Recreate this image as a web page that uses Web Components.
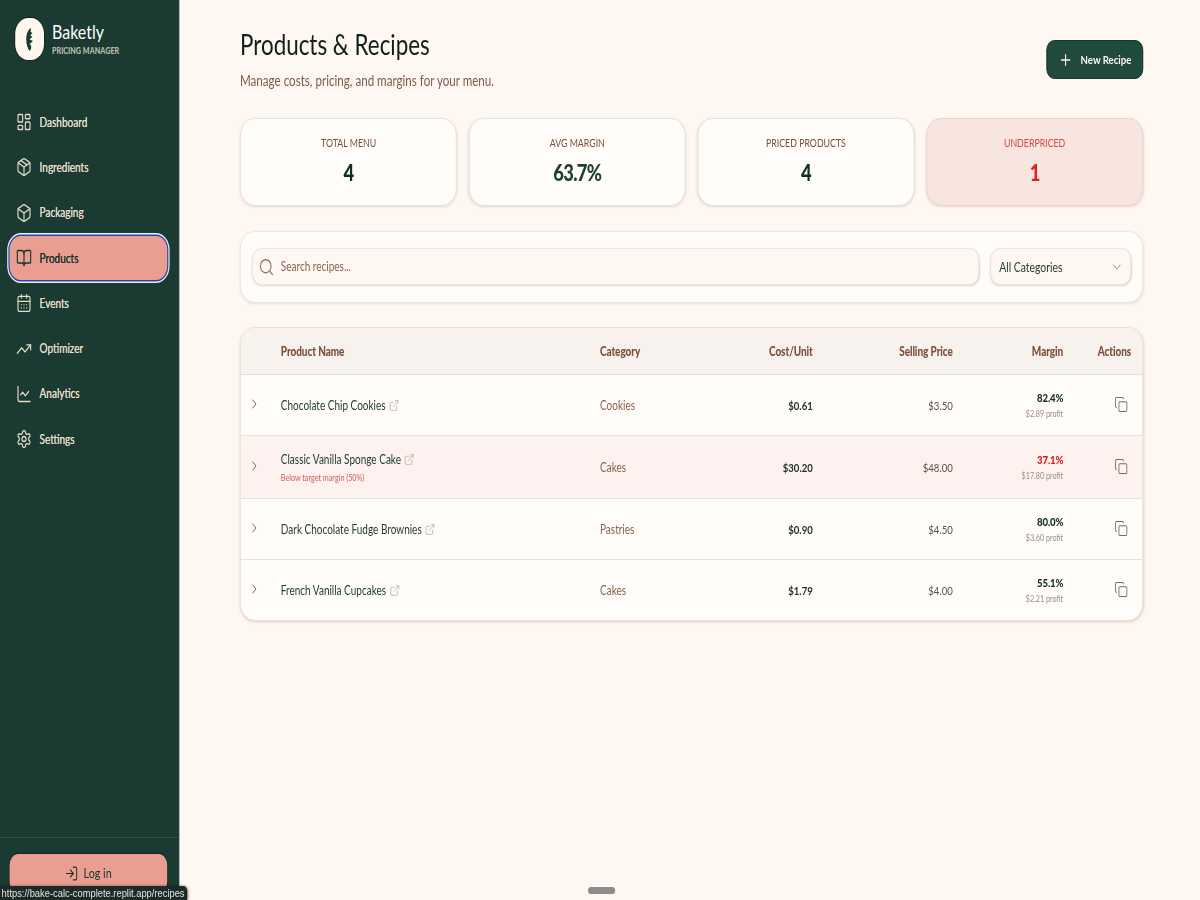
<!DOCTYPE html>
<html><head><meta charset="utf-8">
<style>
html,body{margin:0;width:1200px;height:900px;background:#fff7f2;font-family:Lato,"Noto Sans",sans-serif;overflow:hidden}
</style></head><body>
<bk-app></bk-app>
<script>
const I={
dash:'<rect width="7" height="9" x="3" y="3" rx="1"/><rect width="7" height="5" x="14" y="3" rx="1"/><rect width="7" height="9" x="14" y="12" rx="1"/><rect width="7" height="5" x="3" y="16" rx="1"/>',
pack:'<path d="m7.5 4.27 9 5.15"/><path d="M21 8a2 2 0 0 0-1-1.73l-7-4a2 2 0 0 0-2 0l-7 4A2 2 0 0 0 3 8v8a2 2 0 0 0 1 1.73l7 4a2 2 0 0 0 2 0l7-4A2 2 0 0 0 21 16Z"/><path d="m3.3 7 8.7 5 8.7-5"/><path d="M12 22V12"/>',
box:'<path d="M21 8a2 2 0 0 0-1-1.73l-7-4a2 2 0 0 0-2 0l-7 4A2 2 0 0 0 3 8v8a2 2 0 0 0 1 1.73l7 4a2 2 0 0 0 2 0l7-4A2 2 0 0 0 21 16Z"/><path d="m3.3 7 8.7 5 8.7-5"/><path d="M12 22V12"/>',
book:'<path d="M12 7v14"/><path d="M3 18a1 1 0 0 1-1-1V4a1 1 0 0 1 1-1h5a4 4 0 0 1 4 4 4 4 0 0 1 4-4h5a1 1 0 0 1 1 1v13a1 1 0 0 1-1 1h-6a3 3 0 0 0-3 3 3 3 0 0 0-3-3z"/>',
cal:'<path d="M8 2v4"/><path d="M16 2v4"/><rect width="18" height="18" x="3" y="4" rx="2"/><path d="M3 10h18"/><path d="M8 14h.01"/><path d="M12 14h.01"/><path d="M16 14h.01"/><path d="M8 18h.01"/><path d="M12 18h.01"/><path d="M16 18h.01"/>',
trend:'<path d="M16 7h6v6"/><path d="m22 7-8.5 8.5-5-5L2 17"/>',
chart:'<path d="M3 3v16a2 2 0 0 0 2 2h16"/><path d="m19 9-5 5-4-4-3 3"/>',
gear:'<path d="M12.22 2h-.44a2 2 0 0 0-2 2v.18a2 2 0 0 1-1 1.73l-.43.25a2 2 0 0 1-2 0l-.15-.08a2 2 0 0 0-2.73.73l-.22.38a2 2 0 0 0 .73 2.73l.15.1a2 2 0 0 1 1 1.72v.51a2 2 0 0 1-1 1.74l-.15.09a2 2 0 0 0-.73 2.73l.22.38a2 2 0 0 0 2.73.73l.15-.08a2 2 0 0 1 2 0l.43.25a2 2 0 0 1 1 1.73V20a2 2 0 0 0 2 2h.44a2 2 0 0 0 2-2v-.18a2 2 0 0 1 1-1.73l.43-.25a2 2 0 0 1 2 0l.15.08a2 2 0 0 0 2.73-.73l.22-.39a2 2 0 0 0-.73-2.73l-.15-.08a2 2 0 0 1-1-1.74v-.5a2 2 0 0 1 1-1.74l.15-.09a2 2 0 0 0 .73-2.73l-.22-.38a2 2 0 0 0-2.73-.73l-.15.08a2 2 0 0 1-2 0l-.43-.25a2 2 0 0 1-1-1.73V4a2 2 0 0 0-2-2z"/><circle cx="12" cy="12" r="3"/>',
login:'<path d="M15 3h4a2 2 0 0 1 2 2v14a2 2 0 0 1-2 2h-4"/><path d="m10 17 5-5-5-5"/><path d="M15 12H3"/>',
plus:'<path d="M5 12h14"/><path d="M12 5v14"/>',
search:'<path d="m21 21-4.34-4.34"/><circle cx="11" cy="11" r="8"/>',
down:'<path d="m6 9 6 6 6-6"/>',
right:'<path d="m9 18 6-6-6-6"/>',
ext:'<path d="M15 3h6v6"/><path d="M10 14 21 3"/><path d="M18 13v6a2 2 0 0 1-2 2H5a2 2 0 0 1-2-2V8a2 2 0 0 1 2-2h6"/>',
copy:'<rect width="14" height="14" x="8" y="8" rx="2"/><path d="M4 16c-1.1 0-2-.9-2-2V4c0-1.1.9-2 2-2h10c1.1 0 2 .9 2 2"/>'
};
const svg=(n,s,sw=2)=>`<svg width="${s}" height="${s}" viewBox="0 0 24 24" fill="none" stroke="currentColor" stroke-width="${sw}" stroke-linecap="round" stroke-linejoin="round" style="flex:none;display:block">${I[n]}</svg>`;
class El extends HTMLElement{
 constructor(){super();this.attachShadow({mode:'open'});}
 connectedCallback(){this.shadowRoot.innerHTML=this.render();}
 a(n){return this.getAttribute(n)||'';}
}
class NavItem extends El{render(){return `<style>
:host{display:block}
a{display:flex;align-items:center;gap:9.5px;height:45.3px;box-sizing:border-box;padding:0 8px;font-size:12.5px;color:#e3dccb;border-radius:14px;text-shadow:0 0 .4px currentColor}
:host([active]) a{height:44px;margin:.65px 0;background:#ea9e92;color:#17342c;box-shadow:0 0 0 1.5px #1f47b8,0 0 0 3px #f4efe8}
</style><a>${svg(this.a('icon'),20,1.7)}<span><slot></slot></span></a>`}}
class Sidebar extends El{render(){return `<style>
:host{display:flex;flex-direction:column;width:224px;flex:none;box-sizing:border-box;height:900px;background:#1b3a31;border-right:1px solid #234a3e}
.brand{display:flex;gap:10px;padding:18px 19px 0;height:99.5px;box-sizing:border-box}
.logo{width:36px;height:42px;border-radius:16px;background:#fff7f0;box-shadow:0 0 0 1px #10261f;display:flex;align-items:center;justify-content:center;color:#1b3a31}
.t{font-size:20px;color:#fff;line-height:20px;margin-top:3px;font-weight:400}
.s{font-size:9px;font-weight:900;color:#b9bdaa;margin-top:5px;line-height:10px;white-space:nowrap}
nav{padding:0 14px 0 12px;flex:1}
.foot{border-top:1px solid #2a5245;padding:16px 12px 0;height:63.5px;box-sizing:border-box;flex:none}
.login{height:39px;border-radius:11px;background:#ea9e92;color:#17342c;display:flex;align-items:center;justify-content:center;gap:6px;font-size:13.5px;box-shadow:0 0 0 1px #12291f;margin-right:2px}
</style>
<div class="brand"><div class="logo"><svg width="12" height="25" viewBox="0 0 10 25" preserveAspectRatio="none" fill="currentColor"><path d="M6.5 1C3 3 1.500 7 1.500 12.500c0 5 1.500 9 3.500 11.500 1.500-1 2-3 1.500-5.500L5 17l3.500-3-3.500-1.500L8 9.500 5.500 8.500 8 6 6 5z"/></svg></div><div><div class="t">Baketly</div><div class="s">PRICING MANAGER</div></div></div>
<nav><slot></slot></nav>
<div class="foot"><div class="login">${svg('login',17,1.7)}<span>Log in</span></div></div>`}}
class Stat extends El{render(){return `<style>
:host{display:block;height:88px;box-sizing:border-box;border:1.5px solid #eadfd5;border-radius:18px;background:#fffcf9;box-shadow:0 1px 3px rgba(90,60,40,.15);text-align:center;padding-top:17px;color:#7b4f38}
:host([alert]){background:#f8e5df;border-color:#f0cfc6;color:#d84a45}
.l{font-size:11px;line-height:14px}
.v{font-size:23px;font-weight:900;line-height:26px;margin-top:9px;color:#122e25;letter-spacing:-.9px}
:host([green]) .v{color:#1b3f34}
:host([alert]) .v{color:#cf2626}
</style><div class="l">${this.a('label')}</div><div class="v">${this.a('value')}</div>`}}
class Toolbar extends El{render(){return `<style>
:host{display:flex;gap:14px;box-sizing:border-box;height:72px;margin-top:25px;padding:16px 14px 17px;border:1.5px solid #eee5dc;border-radius:18px;background:#fffcf9;box-shadow:0 1px 3px rgba(90,60,40,.12)}
.f{height:37px;box-sizing:border-box;border:1.5px solid #efe3da;border-radius:12px;background:#fff7f2;box-shadow:0 1px 2px rgba(90,60,40,.2);display:flex;align-items:center}
.s{flex:1;padding-left:7px;gap:8px;color:#8a6553;font-size:12.5px}
.c{width:176px;flex:none;padding:0 9px 0 10px;justify-content:space-between;color:#2b3d36;font-size:13px}
.c svg{color:#8a857a}
</style><div class="f s">${svg('search',20,1.5)}<span>Search recipes...</span></div><div class="f c"><span>All Categories</span>${svg('down',16,1.5)}</div>`}}
class Table extends El{render(){return `<style>
:host{display:block;margin-top:24px;border:1.5px solid #eadfd5;border-radius:18px;background:#fffcf9;box-shadow:0 1px 3px rgba(90,60,40,.2);overflow:hidden;--cols:50px 399px 100px 166px 175px 138px 1fr}
.h{display:grid;grid-template-columns:var(--cols);height:45.5px;align-items:center;background:#f7f2ed;border-bottom:1.5px solid #eadfd5;font-size:12.5px;font-weight:900;color:#7b4f38;letter-spacing:-.1px}
.h span{padding-top:1px}
.h .r{text-align:right;white-space:nowrap}.h .r:last-child{padding-right:14px}
</style><div class="h"><span></span><span>Product Name</span><span>Category</span><span class="r">Cost/Unit</span><span class="r">Selling Price</span><span class="r">Margin</span><span class="r">Actions</span></div><slot></slot>`}}
class Row extends El{render(){const bad=this.hasAttribute('bad');return `<style>
:host{display:grid;grid-template-columns:var(--cols);height:61px;align-items:center;box-sizing:border-box;border-bottom:1.5px solid #ebe0d8;font-size:12.5px;color:#1b3a31}
:host(:last-child){border-bottom:0;height:60px}
:host([bad]){height:63px;background:#fdf2ef}
.chev{color:#7b4f38;padding-left:9px;margin-top:-1px}
.tx{padding-top:2px}
.n{display:flex;align-items:center;gap:4px}
.n svg{color:#a9a59c}
.w{font-size:9px;color:#d25b58;margin-top:6px;line-height:10px}
.cat{color:#8a5f4b}
.cost{text-align:right;font-weight:700;color:#1f2e29;font-size:12px}
.sell{text-align:right;color:#5d5047;font-size:12px}
.m{text-align:right}
.mv{font-weight:900;font-size:12px;color:#122e25;line-height:14px;letter-spacing:-.2px}
:host([bad]) .mv{color:#cf1f1f}
.p{font-size:9px;color:#a08c80;line-height:10px;margin-top:4px}
.a{display:flex;justify-content:flex-end;padding-right:18.500px;color:#7d685c}
</style>
<div class="chev">${svg('right',16,1.5)}</div>
<div class="tx"><div class="n"><span>${this.a('name')}</span>${svg('ext',13,1.4)}</div>${bad?'<div class="w">Below target margin (50%)</div>':''}</div>
<div class="cat tx">${this.a('cat')}</div><div class="cost tx">${this.a('cost')}</div><div class="sell tx">${this.a('sell')}</div>
<div class="m"><div class="mv">${this.a('margin')}</div><div class="p">${this.a('profit')}</div></div>
<div class="a">${svg('copy',17,1.5)}</div>`}}
class App extends El{render(){return `<style>
:host{display:block;width:1200px;height:900px;overflow:clip}
.frame{display:flex;width:1500px;height:900px;position:relative;overflow:hidden;transform:scaleX(.8);transform-origin:0 0}
main{flex:1;box-sizing:border-box;padding:24px 71px 0 76px;min-width:0}
.top{display:flex;justify-content:space-between;height:94px}
h1{margin:0;font-size:28px;font-weight:400;color:#111f1a;line-height:40px;font-family:Lato,sans-serif}
p{margin:8px 0 0;font-size:14.500px;color:#80594a;line-height:18px}
.btn{height:39px;margin-top:16px;width:121px;box-sizing:border-box;border-radius:10px;background:#1f4a3c;border:1px solid #10261f;color:#fdf8f3;display:flex;align-items:center;justify-content:center;gap:10px;font-size:12px;font-weight:700}
.stats{display:grid;grid-template-columns:repeat(4,1fr);gap:14.400px}
.status{position:absolute;left:0;bottom:0;width:234px;height:14px;background:#1e2a27;border-radius:0 5px 0 0;color:#dfe3e0;font:11.700px/14px "Liberation Sans",sans-serif;white-space:nowrap;box-shadow:0 0 3px rgba(0,0,0,.5);padding-left:2px;box-sizing:border-box}
.pill{position:absolute;left:735px;top:887px;width:34px;height:7px;border-radius:4px;background:#8d8d8d}
</style>
<div class="frame"><slot name="side"></slot>
<main><div class="top"><div><h1>Products &amp; Recipes</h1><p>Manage costs, pricing, and margins for your menu.</p></div><div class="btn">${svg('plus',18,1.8)}<span>New Recipe</span></div></div>
<div class="stats"><slot name="stat"></slot></div><slot name="rest"></slot></main>
<div class="pill"></div><div class="status">https://bake-calc-complete.replit.app/recipes</div></div>`}}
[['bk-nav-item',NavItem],['bk-sidebar',Sidebar],['bk-stat',Stat],['bk-toolbar',Toolbar],['bk-table',Table],['bk-row',Row],['bk-app',App]].forEach(([n,c])=>customElements.define(n,c));
document.querySelector('bk-app').innerHTML=`
<bk-sidebar slot="side">
<bk-nav-item icon="dash">Dashboard</bk-nav-item><bk-nav-item icon="pack">Ingredients</bk-nav-item><bk-nav-item icon="box">Packaging</bk-nav-item><bk-nav-item icon="book" active>Products</bk-nav-item><bk-nav-item icon="cal">Events</bk-nav-item><bk-nav-item icon="trend">Optimizer</bk-nav-item><bk-nav-item icon="chart">Analytics</bk-nav-item><bk-nav-item icon="gear">Settings</bk-nav-item>
</bk-sidebar>
<bk-stat slot="stat" label="TOTAL MENU" value="4"></bk-stat><bk-stat slot="stat" green label="AVG MARGIN" value="63.7%"></bk-stat><bk-stat slot="stat" label="PRICED PRODUCTS" value="4"></bk-stat><bk-stat slot="stat" alert label="UNDERPRICED" value="1"></bk-stat>
<bk-toolbar slot="rest"></bk-toolbar>
<bk-table slot="rest">
<bk-row name="Chocolate Chip Cookies" cat="Cookies" cost="$0.61" sell="$3.50" margin="82.4%" profit="$2.89 profit"></bk-row>
<bk-row bad name="Classic Vanilla Sponge Cake" cat="Cakes" cost="$30.20" sell="$48.00" margin="37.1%" profit="$17.80 profit"></bk-row>
<bk-row name="Dark Chocolate Fudge Brownies" cat="Pastries" cost="$0.90" sell="$4.50" margin="80.0%" profit="$3.60 profit"></bk-row>
<bk-row name="French Vanilla Cupcakes" cat="Cakes" cost="$1.79" sell="$4.00" margin="55.1%" profit="$2.21 profit"></bk-row>
</bk-table>`;
</script></body></html>
